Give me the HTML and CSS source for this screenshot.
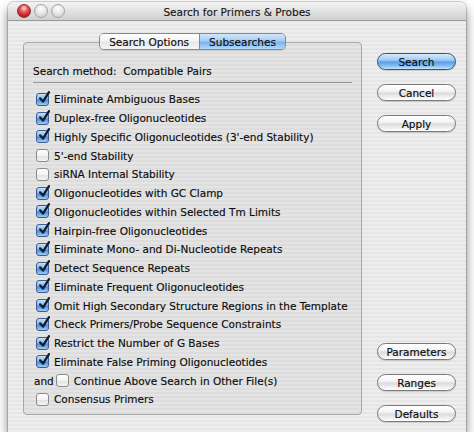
FILE: index.html
```html
<!DOCTYPE html>
<html lang="en">
<head>
<meta charset="utf-8">
<title>Search for Primers &amp; Probes</title>
<link rel="stylesheet" href="styles.css">
</head>
<body>
<div class="window">
  <div class="titlebar">
    <div class="lights">
      <span class="light close"></span>
      <span class="light"></span>
      <span class="light"></span>
    </div>
    <div class="title">Search for Primers &amp; Probes</div>
    <div class="spacer"></div>
  </div>

  <div class="content">
    <div class="tabview">
      <div class="tabs">
        <span class="tab">Search Options</span>
        <span class="tab active">Subsearches</span>
      </div>
      <div class="box">
        <div class="method">Search method:&nbsp; Compatible Pairs</div>
        <div class="rule"></div>
        <ul class="checks">
          <li class="row"><span class="cb on"></span>Eliminate Ambiguous Bases</li>
          <li class="row"><span class="cb on"></span>Duplex-free Oligonucleotides</li>
          <li class="row"><span class="cb on"></span>Highly Specific Oligonucleotides (3'-end Stability)</li>
          <li class="row"><span class="cb"></span>5'-end Stability</li>
          <li class="row"><span class="cb"></span>siRNA Internal Stability</li>
          <li class="row"><span class="cb on"></span>Oligonucleotides with GC Clamp</li>
          <li class="row"><span class="cb on"></span>Oligonucleotides within Selected Tm Limits</li>
          <li class="row"><span class="cb on"></span>Hairpin-free Oligonucleotides</li>
          <li class="row"><span class="cb on"></span>Eliminate Mono- and Di-Nucleotide Repeats</li>
          <li class="row"><span class="cb on"></span>Detect Sequence Repeats</li>
          <li class="row"><span class="cb on"></span>Eliminate Frequent Oligonucleotides</li>
          <li class="row"><span class="cb on"></span>Omit High Secondary Structure Regions in the Template</li>
          <li class="row"><span class="cb on"></span>Check Primers/Probe Sequence Constraints</li>
          <li class="row"><span class="cb on"></span>Restrict the Number of G Bases</li>
          <li class="row"><span class="cb on"></span>Eliminate False Priming Oligonucleotides</li>
          <li class="row and"><span class="and-label">and</span><span class="cb"></span>Continue Above Search in Other File(s)</li>
          <li class="row"><span class="cb"></span>Consensus Primers</li>
        </ul>
      </div>
    </div>

    <div class="buttons">
      <div class="group">
        <button class="btn default">Search</button>
        <button class="btn">Cancel</button>
        <button class="btn">Apply</button>
      </div>
      <div class="group">
        <button class="btn">Parameters</button>
        <button class="btn">Ranges</button>
        <button class="btn">Defaults</button>
      </div>
    </div>
  </div>
</div>
</body>
</html>
```

FILE: styles.css
```css
* {
  box-sizing: border-box;
}

html, body {
  margin: 0;
  padding: 0;
  background: #ffffff;
}

body {
  font-family: "DejaVu Sans", "Noto Sans", sans-serif;
  font-size: 10.5px;
  color: #0d0d0d;
  -webkit-text-stroke: 0.15px #0d0d0d;
}

/* ---- window frame ---- */
.window {
  margin: 2px 0 0 8px;
  width: 458px;
  height: 430px;
  border-radius: 6px 6px 0 0;
  background:
    repeating-linear-gradient(to bottom, #eeeeee 0, #eeeeee 2px, #e6e6e6 2px, #e6e6e6 4px);
  box-shadow: 0 6px 11px rgba(0, 0, 0, 0.5), 0 0 0 1px rgba(0, 0, 0, 0.16);
  display: flex;
  flex-direction: column;
}

.titlebar {
  height: 19px;
  display: grid;
  grid-template-columns: 1fr auto 1fr;
  align-items: center;
  border-radius: 6px 6px 0 0;
  background: linear-gradient(to bottom, #f4f4f4 0%, #e3e3e3 45%, #d0d0d0 100%);
  border-bottom: 1px solid #9a9a9a;
}

.lights {
  display: flex;
  gap: 3px;
  padding-left: 9px;
}

.light {
  width: 14px;
  height: 14px;
  border-radius: 50%;
  border: 1px solid #a3a3a3;
  background: radial-gradient(circle at 50% 30%, #ffffff 0%, #e8e8e8 45%, #c6c6c6 100%);
}

.light.close {
  border-color: #8e2a2a;
  background: radial-gradient(circle at 50% 28%, #ffd6d6 0%, #e8585a 35%, #b81a1f 75%, #e0595c 100%);
}

.title {
  font-size: 10.5px;
  color: #1a1a1a;
  padding-top: 1px;
}

/* ---- window body ---- */
.content {
  flex: 1;
  display: flex;
  gap: 15px;
  padding: 12px 10px 10px 15px;
}

.tabview {
  width: 339px;
  display: flex;
  flex-direction: column;
  align-items: center;
}

.tabs {
  position: relative;
  z-index: 1;
  display: flex;
  height: 17px;
  border: 1px solid #888888;
  border-radius: 5px;
  overflow: hidden;
  box-shadow: 0 1px 1px rgba(0, 0, 0, 0.12);
}

.tab {
  display: flex;
  align-items: center;
  padding: 0 10px 0 9px;
  background: linear-gradient(to bottom, #ffffff 0%, #f4f4f4 45%, #e6e6e6 55%, #f6f6f6 100%);
}

.tab + .tab {
  border-left: 1px solid #888888;
}

.tab.active {
  padding: 0 9px 0 9px;
  background: linear-gradient(to bottom, #d3e7fb 0%, #a6cdf4 45%, #7db3ec 55%, #b2d7fa 100%);
}

.box {
  align-self: stretch;
  flex: 1;
  margin-top: -8px;
  margin-bottom: 7px;
  padding: 20px 9px 0 9px;
  border: 1px solid #a7a7a7;
  border-radius: 4px;
  background: rgba(0, 0, 0, 0.04);
}

.method {
  height: 16px;
  line-height: 16px;
}

.rule {
  margin-top: 3px;
  height: 1px;
  background: #969696;
}

.checks {
  list-style: none;
  margin: 7px 0 0 0;
  padding: 0;
}

.row {
  height: 18.75px;
  display: flex;
  align-items: center;
  white-space: nowrap;
}

.cb {
  position: relative;
  flex: none;
  width: 13px;
  height: 13px;
  margin: 0 5px 0 3px;
  border: 1px solid #8a8a8a;
  border-radius: 3px;
  background: linear-gradient(to bottom, #ffffff 0%, #f3f3f3 50%, #e2e2e2 55%, #f5f5f5 100%);
}

.cb.on {
  border-color: #3a5d8d;
  background: linear-gradient(to bottom, #c8e1f8 0%, #7fb4eb 45%, #4a8cdb 55%, #9ccdf6 100%);
}

/* check mark drawn as a bold stroke that pokes out of the top right corner */
.cb.on::after {
  content: "";
  position: absolute;
  left: 2px;
  top: -3px;
  width: 11px;
  height: 13px;
  background: url("data:image/svg+xml;utf8,<svg xmlns='http://www.w3.org/2000/svg' width='11' height='13' viewBox='0 0 11 13'><path d='M1.2 7.4 L4 10.6 L10 1.2' fill='none' stroke='%23121c2e' stroke-width='2.3' stroke-linecap='round' stroke-linejoin='round'/></svg>") no-repeat;
}

.row.and .and-label {
  margin-left: 1px;
}

.row.and .cb {
  margin-left: 2px;
}

/* ---- push buttons ---- */
.buttons {
  width: 79px;
  display: flex;
  flex-direction: column;
  justify-content: space-between;
  padding-top: 20px;
}

.group {
  display: flex;
  flex-direction: column;
  gap: 14px;
}

.btn {
  height: 17px;
  width: 79px;
  padding: 0;
  font-family: inherit;
  font-size: 10.5px;
  color: #0d0d0d;
  border: 1px solid #7a7a7a;
  border-radius: 9px;
  background: linear-gradient(to bottom, #ffffff 0%, #f5f5f5 40%, #dcdcdc 55%, #efefef 80%, #ffffff 100%);
  box-shadow: 0 1px 1px rgba(0, 0, 0, 0.15);
}

.btn.default {
  border-color: #2f5687;
  background: linear-gradient(to bottom, #d6ebfd 0%, #9fcaf4 40%, #5c9de6 55%, #86c1f6 80%, #c4e4fd 100%);
}
```
